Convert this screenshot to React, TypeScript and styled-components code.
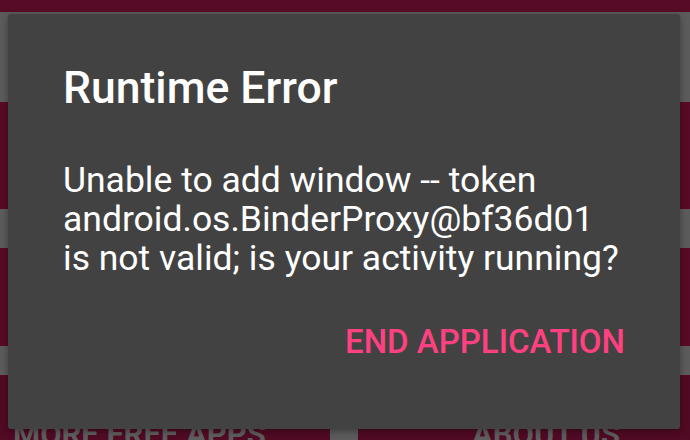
import React from "react";
import styled, { createGlobalStyle } from "styled-components";

const Global = createGlobalStyle`
  html, body { margin: 0; padding: 0; }
  body { width: 690px; height: 440px; overflow: hidden; font-family: Roboto, "Noto Sans", sans-serif; }
`;

const Screen = styled.div`
  position: relative;
  width: 690px;
  height: 440px;
  overflow: hidden;
  background: #5b5b5b;
  display: flex;
  flex-direction: column;
`;

const Band = styled.div<{ $h: number; $mt?: number }>`
  flex: none;
  height: ${(p) => p.$h}px;
  margin-top: ${(p) => p.$mt ?? 0}px;
  background: #570b27;
`;

const BottomRow = styled.div`
  flex: none;
  margin-top: 29px;
  height: 65px;
  display: grid;
  grid-template-columns: 330px 332px;
  column-gap: 28px;
`;

const BottomButton = styled.div<{ $pl: number }>`
  background: #500a23;
  color: #5d5d5d;
  font-family: Roboto, sans-serif;
  font-weight: 700;
  font-size: 31px;
  line-height: 40px;
  padding-top: 40px;
  padding-left: ${(p) => p.$pl}px;
  white-space: nowrap;
  overflow: hidden;
`;

const Dialog = styled.div`
  position: absolute;
  left: 8px;
  top: 14px;
  width: 672px;
  height: 415px;
  box-sizing: border-box;
  padding: 49px 55px 0 55px;
  background: #424242;
  border-radius: 3px;
  box-shadow: 0 2px 6px rgba(0, 0, 0, 0.35);
  display: flex;
  flex-direction: column;
`;

const Title = styled.div`
  color: #ffffff;
  font-weight: 500;
  font-size: 44.5px;
  line-height: 50px;
  white-space: nowrap;
`;

const Message = styled.div`
  margin-top: 48px;
  color: #ffffff;
  font-weight: 400;
  font-size: 35.5px;
  line-height: 39px;
  white-space: nowrap;
`;

const Actions = styled.div`
  margin-top: 44px;
  display: flex;
  justify-content: flex-end;
`;

const ActionButton = styled.div`
  color: #ff4081;
  font-weight: 500;
  font-size: 33px;
  line-height: 40px;
  text-transform: uppercase;
  white-space: nowrap;
`;

export default function App() {
  return (
    <>
      <Global />
      <Screen>
        <Band $h={12} />
        <Band $h={107} $mt={90} />
        <Band $h={98} $mt={39} />
        <BottomRow>
          <BottomButton $pl={13}>MORE FREE APPS</BottomButton>
          <BottomButton $pl={114}>ABOUT US</BottomButton>
        </BottomRow>
        <Dialog>
          <Title>Runtime Error</Title>
          <Message>
            Unable to add window -- token
            <br />
            android.os.BinderProxy@bf36d01
            <br />
            is not valid; is your activity running?
          </Message>
          <Actions>
            <ActionButton>End Application</ActionButton>
          </Actions>
        </Dialog>
      </Screen>
    </>
  );
}
